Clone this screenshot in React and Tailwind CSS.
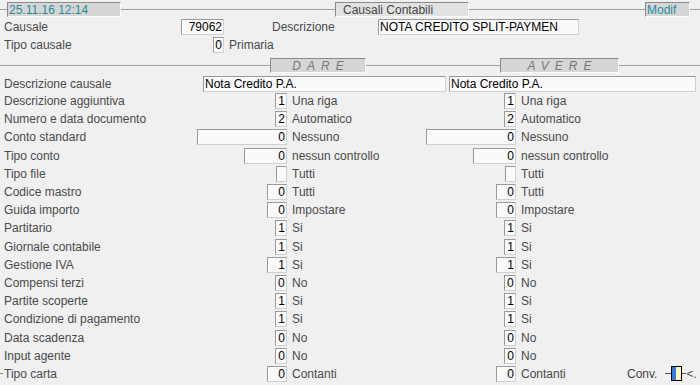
import React from 'react'

const rows = [
  { label: 'Descrizione aggiuntiva', v: '1', w: 12, t: 'Una riga' },
  { label: 'Numero e data documento', v: '2', w: 12, t: 'Automatico' },
  { label: 'Conto standard', v: '0', w: 90, t: 'Nessuno' },
  { label: 'Tipo conto', v: '0', w: 43, t: 'nessun controllo' },
  { label: 'Tipo file', v: '', w: 11, t: 'Tutti' },
  { label: 'Codice mastro', v: '0', w: 20, t: 'Tutti' },
  { label: 'Guida importo', v: '0', w: 20, t: 'Impostare' },
  { label: 'Partitario', v: '1', w: 12, t: 'Si' },
  { label: 'Giornale contabile', v: '1', w: 12, t: 'Si' },
  { label: 'Gestione IVA', v: '1', w: 20, t: 'Si' },
  { label: 'Compensi terzi', v: '0', w: 12, t: 'No', left: true },
  { label: 'Partite scoperte', v: '1', w: 12, t: 'Si' },
  { label: 'Condizione di pagamento', v: '1', w: 12, t: 'Si' },
  { label: 'Data scadenza', v: '0', w: 12, t: 'No' },
  { label: 'Input agente', v: '0', w: 12, t: 'No' },
  { label: 'Tipo carta', v: '0', w: 20, t: 'Contanti', dash: true, conv: true },
]

const Box = ({ v, w, left }) => (
  <div
    className={`h-[16px] bg-[#fafafa] border border-t-[#9a9a9a] border-l-[#9a9a9a] border-b-[#d0d0d0] border-r-[#d0d0d0] text-black flex items-center leading-none ${left ? 'justify-start pl-[2px]' : 'justify-end pr-[1px]'}`}
    style={{ width: w }}
  >
    {v}
  </div>
)

const Field = ({ children, className }) => (
  <div className={`h-[16px] bg-[#fafafa] border border-t-[#9a9a9a] border-l-[#9a9a9a] border-b-[#d0d0d0] border-r-[#d0d0d0] text-black flex items-center leading-none pl-[1px] ${className}`}>
    {children}
  </div>
)

const Tab = ({ children, className }) => (
  <div className={`h-[15px] flex items-center leading-none bg-[#d6d6d6] border border-t-[#8a8a8a] border-l-[#8a8a8a] border-b-[#fdfdfd] border-r-[#fdfdfd] ${className}`}>
    {children}
  </div>
)

export default function App() {
  return (
    <div className="w-[700px] h-[385px] bg-[#f0f0f0] text-[12px] text-[#4a4a4a] overflow-hidden" style={{ fontFamily: '"Liberation Sans", Arial, sans-serif' }}>
      {/* title bar */}
      <div className="h-[18px] flex items-center pt-[1px]">
        <div className="w-[7px] h-px bg-[#a0a0a0]" />
        <Tab className="w-[114px] text-[#1f8c9a] pl-[1px]">25.11.16 12:14</Tab>
        <div className="w-[214px] h-px bg-[#a0a0a0]" />
        <Tab className="w-[134px] bg-[#e2e2e2] pl-[7px] text-[#444]">Causali Contabili</Tab>
        <div className="w-[176px] h-px bg-[#a0a0a0]" />
        <Tab className="w-[45px] text-[#1f8c9a] pl-[1px]">Modif</Tab>
        <div className="flex-1 h-px bg-[#a0a0a0]" />
      </div>

      {/* testata */}
      <div className="h-[18px] flex items-center">
        <div className="w-[181px] pl-[4px]">Causale</div>
        <Field className="w-[43px] justify-end pr-[1px]">79062</Field>
        <div className="w-[154px] pl-[48px]">Descrizione</div>
        <Field className="w-[201px]">NOTA CREDITO SPLIT-PAYMEN</Field>
      </div>
      <div className="h-[18px] flex items-center">
        <div className="w-[213px] pl-[4px]">Tipo causale</div>
        <Box v="0" w={11} />
        <div className="pl-[5px]">Primaria</div>
      </div>

      {/* DARE / AVERE */}
      <div className="h-[15px] mt-[4px] flex items-center">
        <div className="w-[270px] h-px bg-[#a0a0a0]" />
        <Tab className="w-[96px] justify-center italic tracking-[6px] text-[#777] pl-[6px]">DARE</Tab>
        <div className="w-[134px] h-px bg-[#a0a0a0]" />
        <Tab className="w-[119px] justify-center italic tracking-[6px] text-[#777] pl-[6px]">AVERE</Tab>
        <div className="flex-1 h-px bg-[#a0a0a0]" />
      </div>

      <div className="h-[17px] mt-[2px] flex items-center">
        <div className="w-[203px] pl-[4px]">Descrizione causale</div>
        <Field className="w-[243px]">Nota Credito P.A.</Field>
        <Field className="w-[247px] ml-[3px]">Nota Credito P.A.</Field>
      </div>

      {rows.map((r) => (
        <div key={r.label} className="h-[18.2px] grid grid-cols-[287px_229px_1fr] items-center">
          <div className="flex items-center justify-between">
            <div className="flex items-center">
              {r.dash && <div className="w-[3px] h-px bg-[#888]" />}
              <div className={r.dash ? 'pl-px' : 'pl-[4px]'}>{r.label}</div>
            </div>
            <Box v={r.v} w={r.w} left={r.left} />
          </div>
          <div className="flex items-center justify-between">
            <div className="pl-[5px]">{r.t}</div>
            <Box v={r.v} w={r.w} left={r.left} />
          </div>
          <div className="flex items-center">
            <div className="pl-[5px] w-[111px]">{r.t}</div>
            {r.conv && (
              <div className="flex items-center">
                <div className="text-[#444]">Conv.</div>
                <div className="ml-[8px] w-[6px] h-px bg-[#555]" />
                <div className="w-[11px] h-[15px] border border-black flex">
                  <div className="w-[4px] bg-[#2f7de0]" />
                  <div className="flex-1 bg-[#fff6c0]" />
                </div>
                <div className="w-[4px] h-px bg-[#555]" />
                <div className="text-[#555] leading-none">&lt;.</div>
              </div>
            )}
          </div>
        </div>
      ))}
    </div>
  )
}
